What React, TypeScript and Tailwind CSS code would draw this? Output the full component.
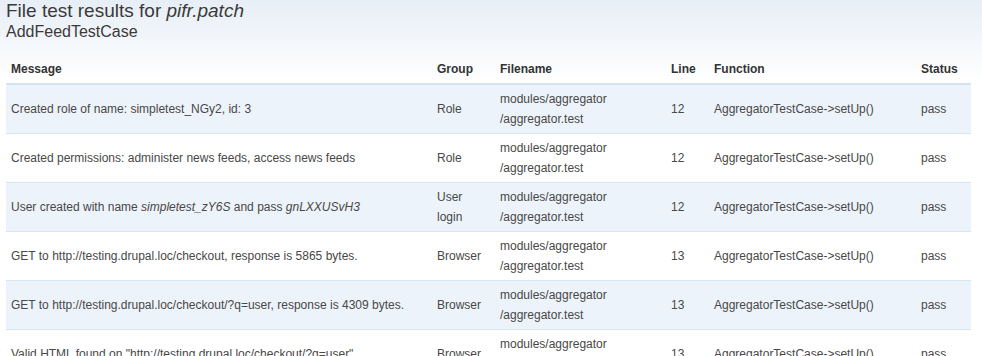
import type { ReactNode } from 'react'

interface ResultRow {
  message: ReactNode
  group: ReactNode
  line: number
}

const rows: ResultRow[] = [
  { message: 'Created role of name: simpletest_NGy2, id: 3', group: 'Role', line: 12 },
  { message: 'Created permissions: administer news feeds, access news feeds', group: 'Role', line: 12 },
  {
    message: (
      <>
        User created with name <em>simpletest_zY6S</em> and pass <em>gnLXXUSvH3</em>
      </>
    ),
    group: 'User login',
    line: 12,
  },
  { message: 'GET to http://testing.drupal.loc/checkout, response is 5865 bytes.', group: 'Browser', line: 13 },
  { message: 'GET to http://testing.drupal.loc/checkout/?q=user, response is 4309 bytes.', group: 'Browser', line: 13 },
  { message: 'Valid HTML found on "http://testing.drupal.loc/checkout/?q=user"', group: 'Browser', line: 13 },
]

const App = () => {
  return (
    <div
      className="min-h-[356px] overflow-hidden bg-[linear-gradient(to_bottom,#e7eef6,#ffffff_80px)] px-[6px] text-[#484848]"
      style={{ fontFamily: '"Liberation Sans", Arial, sans-serif' }}
    >
      <h1 className="text-[19px] leading-[22px] text-[#3a3a3a]">
        File test results for <em>pifr.patch</em>
      </h1>
      <h2 className="text-[16px] leading-[20px] text-[#3a3a3a]">AddFeedTestCase</h2>

      <table className="mt-[13px] w-[965px] table-fixed border-collapse text-[12px] leading-5">
        <thead>
          <tr className="border-b-2 border-[#d3e3f2] text-left text-[#333]">
            <th className="w-[426px] px-[5px] py-1 font-bold">Message</th>
            <th className="w-[63px] px-[5px] py-1 font-bold">Group</th>
            <th className="w-[171px] px-[5px] py-1 font-bold">Filename</th>
            <th className="w-[43px] px-[5px] py-1 font-bold">Line</th>
            <th className="w-[207px] px-[5px] py-1 font-bold">Function</th>
            <th className="w-[55px] px-[5px] py-1 font-bold">Status</th>
          </tr>
        </thead>
        <tbody>
          {rows.map((row, i) => (
            <tr
              key={i}
              className={`border-b border-[#d6e5f2] ${i % 2 === 0 ? 'bg-[#edf3fa]' : 'bg-white'}`}
            >
              <td className="px-[5px] py-1">{row.message}</td>
              <td className="px-[5px] py-1">{row.group}</td>
              <td className="px-[5px] py-1">
                modules/aggregator
                <br />
                /aggregator.test
              </td>
              <td className="px-[5px] py-1">{row.line}</td>
              <td className="px-[5px] py-1">AggregatorTestCase-&gt;setUp()</td>
              <td className="px-[5px] py-1">pass</td>
            </tr>
          ))}
        </tbody>
      </table>
    </div>
  )
}

export default App
